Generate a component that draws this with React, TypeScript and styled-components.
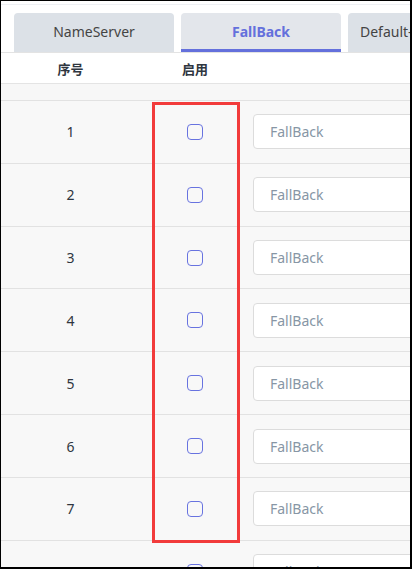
import styled, {createGlobalStyle} from 'styled-components';

const GlobalStyle = createGlobalStyle`
  html, body {
    margin: 0;
    padding: 0;
    background: #fff;
  }
  body {
    font-family: "Noto Sans", "Noto Sans CJK SC", sans-serif;
  }
`;

const Frame = styled.div`
  position: relative;
  width: 412px;
  height: 569px;
  box-sizing: border-box;
  border-style: solid;
  border-color: #000;
  border-width: 1px 2px 2px 1px;
  overflow: hidden;
  background: #fff;
`;

const TopRule = styled.div`
  height: 3px;
  border-bottom: 1px solid #eef0f4;
`;

const TabBar = styled.div`
  display: flex;
  gap: 7px;
  padding: 8px 0 0 13px;
  border-bottom: 1px solid #e3e3e3;
`;

const Tab = styled.div<{$active?: boolean}>`
  flex: 0 0 160px;
  height: 39px;
  box-sizing: border-box;
  display: flex;
  align-items: center;
  justify-content: center;
  border-radius: 4px 4px 0 0;
  background: ${p => (p.$active ? '#e3e6eb' : '#dce1e7')};
  border-bottom: 3px solid ${p => (p.$active ? '#6470dc' : 'transparent')};
  color: ${p => (p.$active ? '#6470dc' : '#444')};
  font-weight: ${p => (p.$active ? 700 : 400)};
  font-size: 14px;
  white-space: nowrap;
  overflow: hidden;
`;

const EdgeTab = styled(Tab)`
  justify-content: flex-start;
  padding-left: 12px;
`;

const Row = styled.div`
  display: grid;
  grid-template-columns: 139px 110px 1fr;
  align-items: center;
`;

const HeadRow = styled(Row)`
  height: 30px;
  border-bottom: 1px solid #e4e4e4;
  font-weight: 700;
  font-size: 13px;
  color: #2f3640;
`;

const Spacer = styled.div`
  height: 16px;
  background: #f7f7f7;
  border-bottom: 1px solid #e2e2e2;
`;

const BodyRow = styled(Row)`
  height: 61.83px;
  background: #f8f8f8;
  border-bottom: 1px solid #e2e2e2;
  font-size: 14px;
  color: #2f3640;
`;

const Cell = styled.div`
  display: flex;
  justify-content: center;
  align-items: center;
`;

const InputCell = styled.div`
  padding-left: 3px;
  min-width: 0;
`;

const Check = styled.span`
  width: 16px;
  height: 16px;
  box-sizing: border-box;
  border: 1.5px solid #6873e0;
  border-radius: 4px;
`;

const TextInput = styled.input`
  width: 240px;
  height: 35px;
  box-sizing: border-box;
  border: 1px solid #dcdcdc;
  border-radius: 4px;
  background: #fff;
  padding: 0 0 0 16px;
  font-family: inherit;
  font-size: 14px;
  outline: none;
  &::placeholder {
    color: #8796a5;
  }
`;

const Highlight = styled.div`
  position: absolute;
  left: 151px;
  top: 101px;
  width: 88px;
  height: 441px;
  box-sizing: border-box;
  border: 3px solid #f23b3b;
  pointer-events: none;
`;

const rows = [1, 2, 3, 4, 5, 6, 7, 8];

export default function App() {
  return (
    <>
      <GlobalStyle />
      <Frame>
        <TopRule />
        <TabBar>
          <Tab>NameServer</Tab>
          <Tab $active>FallBack</Tab>
          <EdgeTab>Default-NameServer</EdgeTab>
        </TabBar>
        <HeadRow>
          <Cell>序号</Cell>
          <Cell>启用</Cell>
          <div />
        </HeadRow>
        <Spacer />
        {rows.map(n => (
          <BodyRow key={n}>
            <Cell>{n}</Cell>
            <Cell>
              <Check />
            </Cell>
            <InputCell>
              <TextInput placeholder="FallBack" />
            </InputCell>
          </BodyRow>
        ))}
        <Highlight />
      </Frame>
    </>
  );
}
